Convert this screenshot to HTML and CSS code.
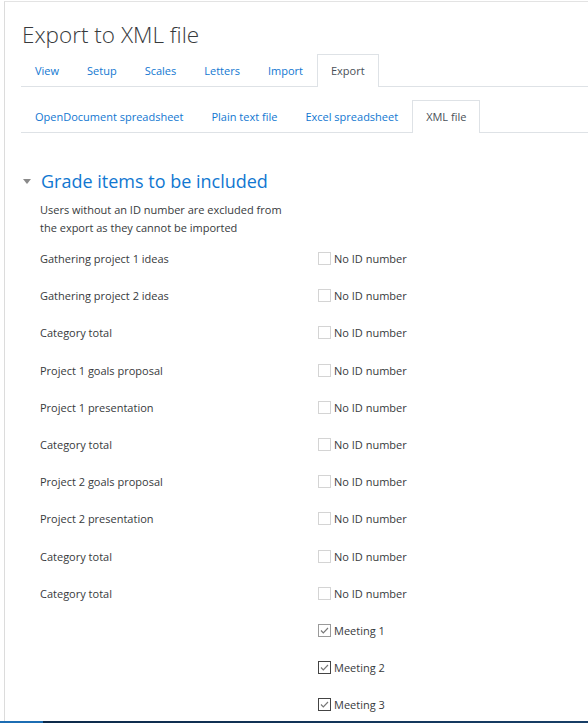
FILE: index.html
```html
<!DOCTYPE html>
<html lang="en">
<head>
    <meta charset="UTF-8">
    <title>Export to XML file</title>
    <link rel="stylesheet" href="styles.css">
</head>
<body>
<div class="page">
    <h2 class="page-title">Export to XML file</h2>

    <ul class="tabs">
        <li><a href="#">View</a></li>
        <li><a href="#">Setup</a></li>
        <li><a href="#">Scales</a></li>
        <li><a href="#">Letters</a></li>
        <li><a href="#">Import</a></li>
        <li class="active"><a href="#">Export</a></li>
    </ul>
    <ul class="tabs sub">
        <li><a href="#">OpenDocument spreadsheet</a></li>
        <li><a href="#">Plain text file</a></li>
        <li><a href="#">Excel spreadsheet</a></li>
        <li class="active"><a href="#">XML file</a></li>
    </ul>

    <div class="section">
        <h3 class="section-head"><span class="caret"></span>Grade items to be included</h3>
        <p class="note">Users without an ID number are excluded from<br>the export as they cannot be imported</p>

        <div class="items">
            <div class="row"><span class="name">Gathering project 1 ideas</span><label class="chk"><span class="box"></span>No ID number</label></div>
            <div class="row"><span class="name">Gathering project 2 ideas</span><label class="chk"><span class="box"></span>No ID number</label></div>
            <div class="row"><span class="name">Category total</span><label class="chk"><span class="box"></span>No ID number</label></div>
            <div class="row"><span class="name">Project 1 goals proposal</span><label class="chk"><span class="box"></span>No ID number</label></div>
            <div class="row"><span class="name">Project 1 presentation</span><label class="chk"><span class="box"></span>No ID number</label></div>
            <div class="row"><span class="name">Category total</span><label class="chk"><span class="box"></span>No ID number</label></div>
            <div class="row"><span class="name">Project 2 goals proposal</span><label class="chk"><span class="box"></span>No ID number</label></div>
            <div class="row"><span class="name">Project 2 presentation</span><label class="chk"><span class="box"></span>No ID number</label></div>
            <div class="row"><span class="name">Category total</span><label class="chk"><span class="box"></span>No ID number</label></div>
            <div class="row"><span class="name">Category total</span><label class="chk"><span class="box"></span>No ID number</label></div>
            <div class="row"><span class="name"></span><label class="chk"><span class="box checked light"><svg viewBox="0 0 11 11"><path d="M2 5.5l2.3 2.3L9 3"/></svg></span>Meeting 1</label></div>
            <div class="row"><span class="name"></span><label class="chk"><span class="box checked"><svg viewBox="0 0 11 11"><path d="M2 5.5l2.3 2.3L9 3"/></svg></span>Meeting 2</label></div>
            <div class="row"><span class="name"></span><label class="chk"><span class="box checked"><svg viewBox="0 0 11 11"><path d="M2 5.5l2.3 2.3L9 3"/></svg></span>Meeting 3</label></div>
        </div>
    </div>
</div>
<div class="taskbar"></div>
</body>
</html>
```

FILE: styles.css
```css
html, body {
    margin: 0;
    height: 100%;
    overflow: hidden;
}
body {
    font-family: "Open Sans", "Noto Sans", sans-serif;
    font-size: 11px;
    color: #373a3c;
    background-color: #fff;
}
.page {
    margin: 1px 0 0 4px;
    border-top: 1px solid #e3e3e3;
    border-left: 1px solid #dcdcdc;
    padding: 0 0 0 16px;
    height: 720px;
    box-sizing: border-box;
}
.page-title {
    margin: 0;
    padding: 18px 0 0 1px;
    font-size: 22.5px;
    font-weight: 300;
    line-height: 30px;
    color: #373a3c;
}
.tabs {
    list-style: none;
    margin: 0;
    padding: 0;
    display: flex;
    border-bottom: 1px solid #dee2e6;
}
.tabs li {
    border: 1px solid transparent;
    border-bottom: none;
    margin-bottom: -1px;
}
.tabs li a {
    display: block;
    padding: 0 13px;
    line-height: 31px;
    color: #1177d1;
    text-decoration: none;
}
.tabs li.active {
    border-color: #dee2e6;
    background-color: #fff;
    padding-bottom: 1px;
}
.tabs li.active a {
    color: #495057;
}
.tabs:first-of-type {
    margin-top: 4px;
}
.tabs.sub {
    margin-top: 13px;
}
.section {
    padding-top: 35px;
}
.section-head {
    margin: 0;
    display: flex;
    align-items: center;
    font-size: 18px;
    font-weight: 400;
    color: #1177d1;
    line-height: 26px;
}
.caret {
    width: 0;
    height: 0;
    border-left: 4.5px solid transparent;
    border-right: 4.5px solid transparent;
    border-top: 5px solid #8a8a8a;
    margin: 0 10px 0 2px;
}
.note {
    margin: 7px 0 0 19px;
    line-height: 18px;
}
.items {
    margin: 3px 0 0 19px;
}
.row {
    display: flex;
    align-items: center;
    height: 37.2px;
}
.name {
    width: 278px;
    flex: none;
}
.chk {
    display: flex;
    align-items: center;
}
.box {
    width: 11px;
    height: 11px;
    border: 1px solid #d4d4d4;
    margin-right: 3px;
    display: flex;
}
.box.checked {
    border-color: #444;
}
.box.checked.light {
    border-color: #9a9a9a;
}
.box svg {
    width: 11px;
    height: 11px;
    fill: none;
    stroke: #777;
    stroke-width: 1.2;
}
.taskbar {
    position: fixed;
    left: 0;
    right: 0;
    bottom: 0;
    height: 2px;
    background: linear-gradient(to right, #1c6db3 0, #1c6db3 43px, #0d2a4a 43px, #173e66 100%);
}
```
